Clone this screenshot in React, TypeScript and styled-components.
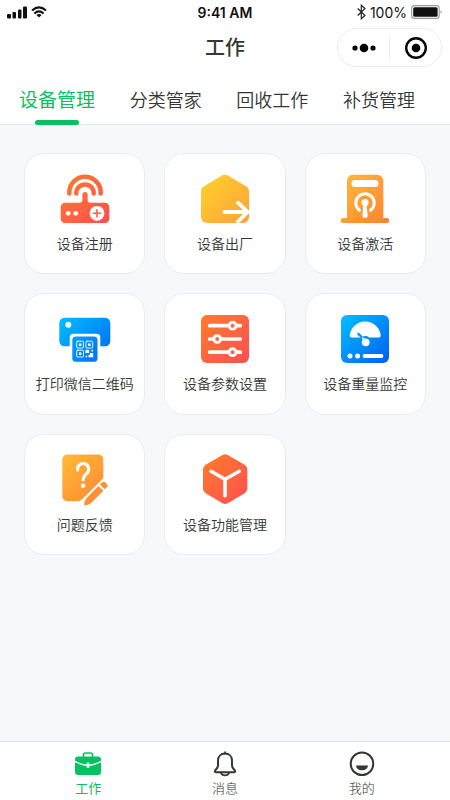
import React, { useState } from 'react';
import styled, { createGlobalStyle } from 'styled-components';

const GlobalStyle = createGlobalStyle`
  * { box-sizing: border-box; }
  body {
    margin: 0;
    background: #f7f8fa;
    color: #323832;
    font-family: Inter, "Noto Sans CJK SC", sans-serif;
  }
  button { font: inherit; color: inherit; border: 0; padding: 0; background: none; cursor: pointer; }
`;

const Page = styled.div`
  min-height: 100vh;
  display: flex;
  flex-direction: column;
`;

const Header = styled.header`
  background: #fff;
  border-bottom: 1px solid #e4e6e8;
`;

const StatusBar = styled.div`
  display: grid;
  grid-template-columns: 1fr auto 1fr;
  align-items: center;
  height: 24px;
  padding: 0 7px;
  color: #111;
  font-size: 14px;
`;

const StatusGroup = styled.div<{ $end?: boolean }>`
  display: flex;
  align-items: center;
  justify-content: ${(p) => (p.$end ? 'flex-end' : 'flex-start')};
  gap: 4px;
`;

const Clock = styled.time`
  font-weight: 600;
`;

const TitleBar = styled.div`
  display: grid;
  grid-template-columns: 1fr auto 1fr;
  align-items: center;
  height: 47px;
  padding: 0 8px;
`;

const Title = styled.h1`
  grid-column: 2;
  margin: 0;
  font-size: 20px;
  line-height: 28px;
  font-weight: 500;
`;

const Capsule = styled.div`
  justify-self: end;
  display: flex;
  align-items: center;
  width: 105px;
  height: 39px;
  border: 1px solid #ececec;
  border-radius: 20px;
`;

const CapsuleButton = styled.button`
  flex: 1;
  display: flex;
  justify-content: center;
  & + & { border-left: 1px solid #ececec; }
`;

const Tabs = styled.nav`
  display: flex;
  justify-content: space-between;
  height: 53px;
  padding: 0 35px 0 19px;
`;

const Tab = styled.button<{ $active: boolean }>`
  position: relative;
  padding: 6px 0 0;
  font-size: ${(p) => (p.$active ? 19 : 18)}px;
  line-height: 24px;
  font-weight: ${(p) => (p.$active ? 400 : 350)};
  color: ${(p) => (p.$active ? '#07c160' : '#323832')};
  &::after {
    content: '';
    display: ${(p) => (p.$active ? 'block' : 'none')};
    position: absolute;
    left: 50%;
    bottom: -1px;
    width: 44px;
    height: 5px;
    margin-left: -22px;
    border-radius: 3px;
    background: #07c160;
  }
`;

const Grid = styled.main`
  flex: 1;
  display: grid;
  grid-template-columns: repeat(3, 1fr);
  align-content: start;
  gap: 19px;
  padding: 28px 24px;
`;

const Card = styled.button`
  display: flex;
  flex-direction: column;
  align-items: center;
  aspect-ratio: 1;
  padding-top: 17px;
  background: #fff;
  border: 1px solid #eaecee;
  border-radius: 20px;
`;

const CardLabel = styled.span`
  margin-top: 7px;
  font-size: 14px;
  line-height: 20px;
  font-weight: 350;
  white-space: nowrap;
`;

const BottomBar = styled.nav`
  position: sticky;
  bottom: 0;
  display: grid;
  grid-template-columns: repeat(3, 1fr);
  height: 59px;
  padding: 8px 20px 0;
  background: #fff;
  border-top: 1px solid #e2e4e5;
`;

const BottomItem = styled.button<{ $active: boolean }>`
  display: flex;
  flex-direction: column;
  align-items: center;
  font-size: 13px;
  line-height: 20px;
  font-weight: ${(p) => (p.$active ? 400 : 300)};
  color: ${(p) => (p.$active ? '#07c160' : '#323832')};
`;

const Gradient = ({ id, from, to }: { id: string; from: string; to: string }) => (
  <defs>
    <linearGradient id={id} gradientUnits="userSpaceOnUse" x1="6" y1="6" x2="50" y2="50">
      <stop offset="0" stopColor={from} />
      <stop offset="1" stopColor={to} />
    </linearGradient>
  </defs>
);

type ArtProps = { id: string; from: string; to: string; children: (paint: string) => React.ReactNode };

const Art = ({ id, from, to, children }: ArtProps) => (
  <svg width="56" height="56" viewBox="0 0 56 56" fill="none" strokeLinecap="round" strokeLinejoin="round" aria-hidden="true">
    <Gradient id={id} from={from} to={to} />
    {children(`url(#${id})`)}
  </svg>
);

const RouterIcon = () => (
  <Art id="router" from="#ff7a2c" to="#ff5050">
    {(p) => (
      <>
        <path d="M12.3 22.4V21.5a15.7 15.7 0 0 1 31.4 0v.9M19.3 22.4v-.3a8.7 8.7 0 0 1 17.4 0v.3" stroke={p} strokeWidth="4.5" />
        <path d="M25.4 23.6a2.6 2.6 0 0 1 5.2 0v5.2q0 2.9 2.9 2.9H48a4.3 4.3 0 0 1 4.3 4.3v11.7A4.3 4.3 0 0 1 48 52H8a4.3 4.3 0 0 1-4.3-4.3V36A4.3 4.3 0 0 1 8 31.7h14.5q2.9 0 2.9-2.9Z" fill={p} />
        <circle cx="11.3" cy="42.3" r="2.4" fill="#fff" />
        <circle cx="18.7" cy="42.3" r="2.4" fill="#fff" />
        <circle cx="40" cy="42.3" r="7.4" fill="#fff" />
        <path d="M36.4 42.3h7.2M40 38.7v7.2" stroke="#ff5d48" strokeWidth="1.6" />
      </>
    )}
  </Art>
);

const ShipIcon = () => (
  <Art id="ship" from="#ffd02e" to="#ffa436">
    {(p) => (
      <>
        <path d="M25 4.6q3-1.7 6 0L49 15.3q3 1.8 3 5.2V46a6 6 0 0 1-6 6H10a6 6 0 0 1-6-6V20.5q0-3.4 3-5.2Z" fill={p} />
        <path d="M27.5 41h23M41 31.7 50.7 41 41 50.5" stroke="#fff" strokeWidth="3.8" />
      </>
    )}
  </Art>
);

const ActivateIcon = () => (
  <Art id="activate" from="#ffb83a" to="#ff8430">
    {(p) => (
      <>
        <path d="M10 47V9.7a6 6 0 0 1 6-6h24.3a6 6 0 0 1 6 6V47h3.5a2.5 2.5 0 0 1 0 5H6.2a2.5 2.5 0 0 1 0-5Z" fill={p} />
        <rect x="14.500" y="9" width="27" height="7" rx="3.500" fill="#fff" />
        <path d="M22.5 39.3a9.2 9.2 0 1 1 11 0" stroke="#fff" strokeWidth="3" />
        <path d="M24.4 31.6a3.6 3.6 0 1 1 5.3 3.1l.9 9.7a2.6 2.6 0 0 1-5.2 0l.9-9.700a3.6 3.6 0 0 1-1.900-3.100Z" fill="#fff" />
      </>
    )}
  </Art>
);

const PrinterIcon = () => (
  <Art id="printer" from="#00bdff" to="#0068f4">
    {(p) => (
      <>
        <path d="M7.5 6.7h40.6a5.2 5.2 0 0 1 5.2 5.2v18.2a5.2 5.2 0 0 1-5.2 5.2h-4.8v-8.9a3.7 3.7 0 0 0-3.7-3.7H16.4a3.7 3.7 0 0 0-3.7 3.7v8.9H7.5a5.2 5.2 0 0 1-5.2-5.2V11.9a5.2 5.2 0 0 1 5.2-5.2Z" fill={p} />
        <circle cx="11.3" cy="13.7" r="3" fill="#fff" />
        <rect x="15.3" y="25.500" width="25.2" height="25.2" rx="3.500" fill={p} />
        <g stroke="#fff" strokeWidth="0.9">
          <rect x="19.7" y="30.2" width="6.8" height="6.8" rx="1" />
          <rect x="28.9" y="30.2" width="6.8" height="6.8" rx="1" />
          <rect x="19.7" y="39.2" width="6.8" height="6.8" rx="1" />
        </g>
        <path d="M21.900 32.400h2.500v2.500h-2.500zM31.100 32.400h2.500v2.500h-2.500zM21.900 41.400h2.500v2.500h-2.500zM28.500 38.800h3.600v3.200h-3.600zM34.400 38.800H36v1.800h-1.600zM33 42h3.200v4.300h-4.700v-2.600H33zM28.600 44.800h1.600v1.500h-1.600z" fill="#fff" />
      </>
    )}
  </Art>
);

const SlidersIcon = () => (
  <Art id="sliders" from="#ff7a2c" to="#ff5050">
    {(p) => (
      <>
        <rect x="4" y="4" width="48" height="48" rx="6" fill={p} />
        <path d="M12.7 14.7h30.6M12.7 28h30.6M12.7 41.2h30.6" stroke="#fff" strokeWidth="3.7" />
        <g fill={p} stroke="#fff" strokeWidth="2.9">
          <circle cx="35.6" cy="14.7" r="3.4" />
          <circle cx="20.2" cy="28" r="3.4" />
          <circle cx="35.6" cy="41.2" r="3.4" />
        </g>
      </>
    )}
  </Art>
);

const ScaleIcon = () => (
  <Art id="scale" from="#00bdff" to="#0062f2">
    {(p) => (
      <>
        <rect x="4" y="4" width="48" height="48" rx="6" fill={p} />
        <path d="M14.500 26.400q-2 0-1.800-2a15.600 15.600 0 0 1 31 0q.2 2-1.800 2h-9.600a6 6 0 0 0-7.400 0Z" fill="#fff" />
        <path d="m21.4 22.8 4.2 4.2" stroke={p} strokeWidth="2.4" />
        <path d="m25.8 27.2 2.4 3" stroke="#fff" strokeWidth="1.8" />
        <circle cx="28.7" cy="31.3" r="3.9" fill="#fff" />
        <circle cx="13" cy="45" r="2.500" fill="#fff" />
        <circle cx="20.6" cy="45" r="2.500" fill="#fff" />
        <path d="M27.500 45h17" stroke="#fff" strokeWidth="3.8" />
      </>
    )}
  </Art>
);

const FeedbackIcon = () => (
  <Art id="feedback" from="#ffb935" to="#ff8434">
    {(p) => (
      <>
        <path d="M10.3 2.5h31a5 5 0 0 1 5 5v18.8L26 46.6q-2.7 2.7-6 2.7h-9.7a5 5 0 0 1-5-5V7.5a5 5 0 0 1 5-5Z" fill={p} />
        <path d="M20.6 18a5.6 5.6 0 1 1 10.4 1.9c-1.4 2.5-4.9 3.3-4.9 7.8" stroke="#fff" strokeWidth="3.200" />
        <circle cx="26.1" cy="33.7" r="2.3" fill="#fff" />
        <path d="m41.3 34 5 4.8-11.6 11.7c-2 1.9-4.4 2.7-6.500 2.7-.7 0-1-.3-1-.9.2-2.500.9-4.800 2.700-6.600ZM42.900 32.400l1.700-1.700a3 3 0 0 1 4.200 0l.7.7a3 3 0 0 1 0 4.200l-1.700 1.700Z" fill={p} />
      </>
    )}
  </Art>
);

const CubeIcon = () => (
  <Art id="cube" from="#ff7a2c" to="#ff5050">
    {(p) => (
      <>
        <path d="M25.5 3q2.6-1.5 5.2 0l17 9.8q2.6 1.5 2.6 4.5v19.500q0 3-2.600 4.500l-17 9.900q-2.600 1.500-5.200 0l-16.900-9.900Q6 39.800 6 36.800V17.300q0-3 2.600-4.500Z" fill={p} />
        <path d="m14 19.3 14 8 14.3-8M28 27.3v16.500" stroke="#fff" strokeWidth="3.6" />
      </>
    )}
  </Art>
);

const WorkIcon = () => (
  <svg width="28" height="28" viewBox="0 0 28 28" fill="none" aria-hidden="true">
    <path d="M9.500 7V5a2 2 0 0 1 2-2h5a2 2 0 0 1 2 2v2" stroke="#07c160" strokeWidth="1.7" />
    <path d="M4.3 6.6h19.4a3.3 3.3 0 0 1 3.3 3.3v.8q-6 3.3-11.7 3.7v-1.6h-2.6v1.6Q7 14 1 10.7v-.8a3.3 3.3 0 0 1 3.3-3.3Z" fill="#07c160" />
    <path d="M1 12.3q6 3.2 11.7 3.7v1.7h2.6V16q5.7-.5 11.7-3.7v9.500a3.300 3.300 0 0 1-3.300 3.300H4.300A3.300 3.300 0 0 1 1 21.800Z" fill="#07c160" />
  </svg>
);

const BellIcon = () => (
  <svg width="28" height="28" viewBox="0 0 28 28" fill="none" stroke="#323832" strokeWidth="2" strokeLinejoin="round" strokeLinecap="round" aria-hidden="true">
    <path d="M14 3.6c-4.2 0-7 3-7 7.1v4.8c0 2.3-1.3 3.2-2.6 4.6-1 1.1-.6 2.1.8 2.1h17.600c1.400 0 1.800-1 .8-2.100-1.300-1.400-2.600-2.300-2.600-4.600v-4.800c0-4.100-2.800-7.100-7-7.100Z" />
    <path d="M14 2.2v1.4M9.8 22.4c.7 2.2 2.2 3 4.2 3s3.5-.8 4.2-3" strokeWidth="1.7" />
  </svg>
);

const MeIcon = () => (
  <svg width="28" height="28" viewBox="0 0 28 28" fill="none" aria-hidden="true">
    <circle cx="14" cy="13.7" r="11.3" stroke="#323832" strokeWidth="2" />
    <path d="M8 15.4h12q-.7 4.800-6 4.800t-6-4.800Z" fill="#323832" />
  </svg>
);

const SignalIcon = () => (
  <svg width="20" height="13" viewBox="0 0 20 13" fill="#111" aria-label="信号" role="img">
    <rect x="0" y="8" width="4" height="4.500" rx="1" />
    <rect x="5.500" y="6" width="3.500" height="6.500" rx="1" />
    <rect x="11" y="3.500" width="3.500" height="9" rx="1" />
    <rect x="16" y="0.500" width="4" height="12" rx="1" />
  </svg>
);

const WifiIcon = () => (
  <svg width="16" height="12" viewBox="0 0 16 12" fill="none" stroke="#111" strokeWidth="2" aria-label="无线网络" role="img">
    <path d="M1 4.500q7-6.200 14 0M3.400 7.400q4.600-4 9.200 0" />
    <path d="M8 11.500 5.400 9q2.600-2 5.200 0Z" fill="#111" stroke="none" />
  </svg>
);

const BluetoothIcon = () => (
  <svg width="9" height="16" viewBox="0 0 9 16" fill="none" stroke="#222" strokeWidth="1.2" aria-label="蓝牙" role="img">
    <path d="m.7 4.500 7.300 7-3.700 3.300V1.200L8 4.500l-7.300 7" />
  </svg>
);

const BatteryIcon = () => (
  <svg width="32" height="14" viewBox="0 0 32 14" fill="none" aria-label="电量" role="img">
    <rect x="0.6" y="0.6" width="27.6" height="12.8" rx="3" stroke="#9a9a9a" strokeWidth="1.1" />
    <rect x="2.2" y="2.2" width="24.4" height="9.6" rx="1.500" fill="#111" />
    <path d="M29.6 5q2.2 2 0 4Z" fill="#999" />
  </svg>
);

const tabs = ['设备管理', '分类管家', '回收工作', '补货管理'];

const tools = [
  { label: '设备注册', Icon: RouterIcon },
  { label: '设备出厂', Icon: ShipIcon },
  { label: '设备激活', Icon: ActivateIcon },
  { label: '打印微信二维码', Icon: PrinterIcon },
  { label: '设备参数设置', Icon: SlidersIcon },
  { label: '设备重量监控', Icon: ScaleIcon },
  { label: '问题反馈', Icon: FeedbackIcon },
  { label: '设备功能管理', Icon: CubeIcon },
];

const sections = [
  { label: '工作', Icon: WorkIcon },
  { label: '消息', Icon: BellIcon },
  { label: '我的', Icon: MeIcon },
];

export default function App() {
  const [tab, setTab] = useState(0);
  const [section, setSection] = useState(0);

  return (
    <Page>
      <GlobalStyle />
      <Header>
        <StatusBar>
          <StatusGroup>
            <SignalIcon />
            <WifiIcon />
          </StatusGroup>
          <Clock>9:41 AM</Clock>
          <StatusGroup $end>
            <BluetoothIcon />
            <span>100%</span>
            <BatteryIcon />
          </StatusGroup>
        </StatusBar>
        <TitleBar>
          <Title>工作</Title>
          <Capsule>
            <CapsuleButton aria-label="更多">
              <svg width="24" height="24" viewBox="0 0 24 24" aria-hidden="true">
                <circle cx="3" cy="12" r="2.6" />
                <circle cx="12" cy="12" r="4.3" />
                <circle cx="21" cy="12" r="2.6" />
              </svg>
            </CapsuleButton>
            <CapsuleButton aria-label="关闭">
              <svg width="24" height="24" viewBox="0 0 24 24" aria-hidden="true">
                <circle cx="12" cy="12" r="9.8" fill="none" stroke="#000" strokeWidth="2.4" />
                <circle cx="12" cy="12" r="4.3" />
              </svg>
            </CapsuleButton>
          </Capsule>
        </TitleBar>
        <Tabs>
          {tabs.map((name, i) => (
            <Tab key={name} $active={i === tab} aria-pressed={i === tab} onClick={() => setTab(i)}>
              {name}
            </Tab>
          ))}
        </Tabs>
      </Header>
      <Grid>
        {tools.map(({ label, Icon }) => (
          <Card key={label}>
            <Icon />
            <CardLabel>{label}</CardLabel>
          </Card>
        ))}
      </Grid>
      <BottomBar>
        {sections.map(({ label, Icon }, i) => (
          <BottomItem key={label} $active={i === section} aria-pressed={i === section} onClick={() => setSection(i)}>
            <Icon />
            <span>{label}</span>
          </BottomItem>
        ))}
      </BottomBar>
    </Page>
  );
}
